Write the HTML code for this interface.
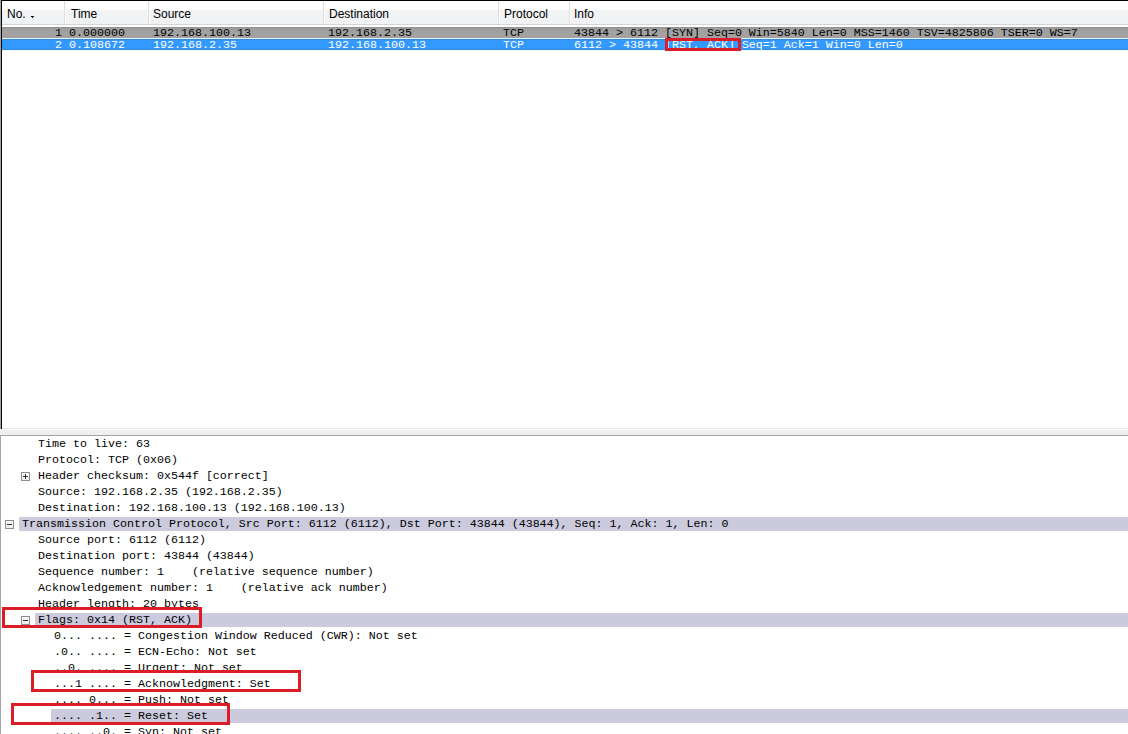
<!DOCTYPE html>
<html><head><meta charset="utf-8">
<style>
html,body{margin:0;padding:0;width:1128px;height:734px;overflow:hidden;background:#fff;}
body{position:relative;font-family:"Liberation Mono",monospace;}
.abs{position:absolute;}
.mono{font-family:"Liberation Mono",monospace;font-size:11.667px;white-space:pre;line-height:16px;}
.sans{font-family:"Liberation Sans",sans-serif;font-size:12px;white-space:pre;line-height:16px;color:#000;}
#winedge{left:0;top:0;width:1px;height:734px;background:#a4a4a4;}
#top{left:1px;top:0;width:1127px;height:429px;background:#fff;}
#topbl{left:1px;top:0;width:1px;height:429px;background:#000;}
#toptl{left:1px;top:0;width:1127px;height:1px;background:#000;}
#hdr{left:2px;top:1px;width:1126px;height:23px;background:linear-gradient(#ffffff 0px,#ffffff 8.5px,#f2f3f5 9.5px,#f1f2f4 23px);}
#hdrline{left:2px;top:24px;width:1126px;height:1px;background:#d5d5d5;}
.sep{top:1px;width:1px;height:23px;background:#dedfe1;}
.sepw{top:1px;width:1px;height:23px;background:#fcfcfc;}
#r1{left:2px;top:27px;width:1126px;height:11px;background:linear-gradient(#999 0%,#a0a0a0 30%,#9fa3a3 55%,#a89f9a 80%,#9ca0ae 100%);}
#r1t{left:2px;top:27px;width:1126px;height:1px;background:#939393;}
#r2hi{left:2px;top:38px;width:1126px;height:1px;background:#dff7ff;}
#r2{left:2px;top:39px;width:1126px;height:11px;background:#3399ff;}
#r2t{left:2px;top:39px;width:1126px;height:1px;background:#3a89dc;}
#r2b{left:2px;top:49px;width:1126px;height:1px;background:#2f8ae2;}
#r2lo{left:2px;top:50px;width:1126px;height:1px;background:#f1fbff;}
.row1{color:#000;}
.row2{color:#fff;}
#splt1{left:2px;top:428px;width:1126px;height:1px;background:#e6e6e6;}
#splw{left:0px;top:429px;width:1128px;height:1px;background:#fbfbfb;}
#spl{left:0px;top:430px;width:1128px;height:5px;background:#efefef;}
#splb{left:0px;top:435px;width:1128px;height:1px;background:#a2a2a2;}
.hl{height:14px;background:#cbcbdd;right:0;}
.box{width:7px;height:7px;border:1px solid #8e8f8f;background:linear-gradient(#fff,#eceeef);}
.box i{position:absolute;left:1px;top:3px;width:5px;height:1px;background:#2e2e2e;font-style:normal;}
.box b{position:absolute;left:3px;top:1px;width:1px;height:5px;background:#2e2e2e;}
.red{border:3px solid #db1d27;box-sizing:border-box;}
</style></head><body>
<div class="abs" id="top"></div>
<div class="abs" id="hdr"></div>
<div class="abs" id="hdrline"></div>
<div class="abs sep" style="left:64px"></div><div class="abs sepw" style="left:65px"></div>
<div class="abs sep" style="left:148px"></div><div class="abs sepw" style="left:149px"></div>
<div class="abs sep" style="left:323px"></div><div class="abs sepw" style="left:324px"></div>
<div class="abs sep" style="left:498px"></div><div class="abs sepw" style="left:499px"></div>
<div class="abs sep" style="left:569px"></div><div class="abs sepw" style="left:570px"></div>
<div class="abs sans" style="left:7px;top:6px">No.</div>
<div class="abs" style="left:31px;top:16px;width:3px;height:1px;background:#000;"></div><div class="abs" style="left:32px;top:17px;width:1px;height:1px;background:#000;"></div>
<div class="abs sans" style="left:71px;top:6px">Time</div>
<div class="abs sans" style="left:153px;top:6px">Source</div>
<div class="abs sans" style="left:329px;top:6px">Destination</div>
<div class="abs sans" style="left:504px;top:6px">Protocol</div>
<div class="abs sans" style="left:574px;top:6px">Info</div>

<div class="abs" id="r1"></div><div class="abs" id="r1t"></div>
<div class="abs" id="r2hi"></div><div class="abs" id="r2"></div><div class="abs" id="r2t"></div><div class="abs" id="r2b"></div><div class="abs" id="r2lo"></div>

<div class="abs mono row1" style="left:55px;top:25px">1</div>
<div class="abs mono row1" style="left:69px;top:25px">0.000000</div>
<div class="abs mono row1" style="left:153px;top:25px">192.168.100.13</div>
<div class="abs mono row1" style="left:328px;top:25px">192.168.2.35</div>
<div class="abs mono row1" style="left:503px;top:25px">TCP</div>
<div class="abs mono row1" style="left:574px;top:25px">43844 &gt; 6112 [SYN] Seq=0 Win=5840 Len=0 MSS=1460 TSV=4825806 TSER=0 WS=7</div>

<div class="abs mono row2" style="left:55px;top:37px">2</div>
<div class="abs mono row2" style="left:69px;top:37px">0.108672</div>
<div class="abs mono row2" style="left:153px;top:37px">192.168.2.35</div>
<div class="abs mono row2" style="left:328px;top:37px">192.168.100.13</div>
<div class="abs mono row2" style="left:503px;top:37px">TCP</div>
<div class="abs mono row2" style="left:574px;top:37px">6112 &gt; 43844 [RST, ACK] Seq=1 Ack=1 Win=0 Len=0</div>

<div class="abs" id="toptl"></div>
<div class="abs" id="topbl"></div>


<!-- details pane -->
<div class="abs hl" style="left:19px;top:517px"></div>
<div class="abs hl" style="left:35px;top:613px"></div>
<div class="abs hl" style="left:51px;top:709px"></div>

<div class="abs box" style="left:21px;top:472px"><i></i><b></b></div>
<div class="abs box" style="left:5px;top:520px"><i></i></div>
<div class="abs box" style="left:21px;top:616px"><i></i></div>

<div class="abs mono" style="left:38px;top:436px">Time to live: 63</div>
<div class="abs mono" style="left:38px;top:452px">Protocol: TCP (0x06)</div>
<div class="abs mono" style="left:38px;top:468px">Header checksum: 0x544f [correct]</div>
<div class="abs mono" style="left:38px;top:484px">Source: 192.168.2.35 (192.168.2.35)</div>
<div class="abs mono" style="left:38px;top:500px">Destination: 192.168.100.13 (192.168.100.13)</div>
<div class="abs mono" style="left:22px;top:516px">Transmission Control Protocol, Src Port: 6112 (6112), Dst Port: 43844 (43844), Seq: 1, Ack: 1, Len: 0</div>
<div class="abs mono" style="left:38px;top:532px">Source port: 6112 (6112)</div>
<div class="abs mono" style="left:38px;top:548px">Destination port: 43844 (43844)</div>
<div class="abs mono" style="left:38px;top:564px">Sequence number: 1    (relative sequence number)</div>
<div class="abs mono" style="left:38px;top:580px">Acknowledgement number: 1    (relative ack number)</div>
<div class="abs mono" style="left:38px;top:596px">Header length: 20 bytes</div>
<div class="abs mono" style="left:38px;top:612px">Flags: 0x14 (RST, ACK)</div>
<div class="abs mono" style="left:54px;top:628px">0... .... = Congestion Window Reduced (CWR): Not set</div>
<div class="abs mono" style="left:54px;top:644px">.0.. .... = ECN-Echo: Not set</div>
<div class="abs mono" style="left:54px;top:660px">..0. .... = Urgent: Not set</div>
<div class="abs mono" style="left:54px;top:676px">...1 .... = Acknowledgment: Set</div>
<div class="abs mono" style="left:54px;top:692px">.... 0... = Push: Not set</div>
<div class="abs mono" style="left:54px;top:708px">.... .1.. = Reset: Set</div>
<div class="abs mono" style="left:54px;top:724px">.... ..0. = Syn: Not set</div>

<div class="abs" id="winedge"></div>
<div class="abs" id="splt1"></div>
<div class="abs" id="splw"></div>
<div class="abs" id="spl"></div>
<div class="abs" id="splb"></div>

<!-- red annotation boxes -->
<div class="abs red" style="left:665px;top:38px;width:76px;height:13px"></div>
<div class="abs red" style="left:2px;top:607px;width:200px;height:21px"></div>
<div class="abs red" style="left:31px;top:670px;width:270px;height:22px"></div>
<div class="abs red" style="left:11px;top:703px;width:219px;height:22px"></div>
</body></html>
